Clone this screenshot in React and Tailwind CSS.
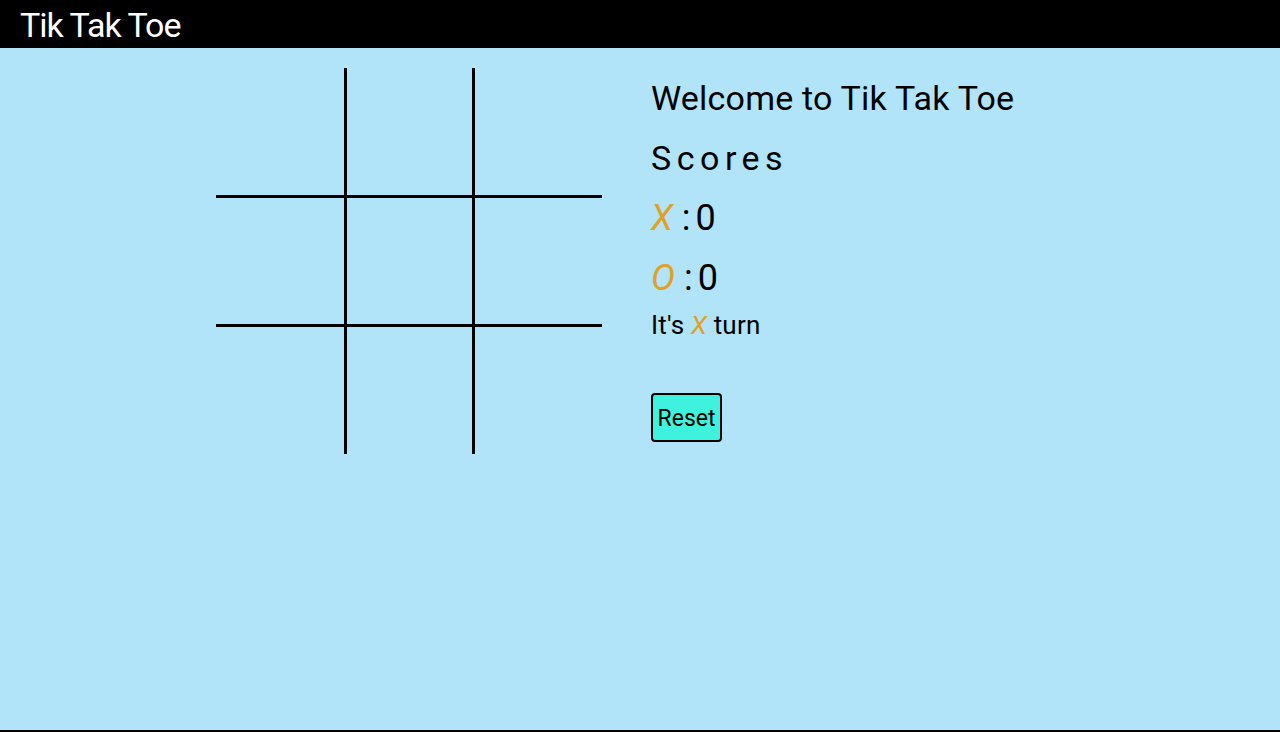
import React, { useState } from 'react';

const font = { fontFamily: 'Roboto, "Noto Sans", sans-serif' };

function Board({ cells, onPlay }) {
    // per-cell border classes so the grid lines only sit between the squares
    const cls = [
        'w-[131px] h-[130px] border-r-[3px] border-b-[3px]',
        'w-[128px] h-[130px] border-r-[3px] border-b-[3px]',
        'w-[127px] h-[130px] border-b-[3px]',
        'w-[131px] h-[129px] border-r-[3px] border-b-[3px]',
        'w-[128px] h-[129px] border-r-[3px] border-b-[3px]',
        'w-[127px] h-[129px] border-b-[3px]',
        'w-[131px] h-[127px] border-r-[3px]',
        'w-[128px] h-[127px] border-r-[3px]',
        'w-[127px] h-[127px]',
    ];
    return (
        <div className="grid grid-cols-[131px_128px_127px] w-[386px] shrink-0">
            {cells.map((c, i) => (
                <button
                    key={i}
                    onClick={() => onPlay(i)}
                    className={`${cls[i]} border-black flex items-center justify-center text-6xl text-[#e0a126] italic`}
                >
                    {c}
                </button>
            ))}
        </div>
    );
}

export default function App() {
    const [cells, setCells] = useState(Array(9).fill(''));
    const [turn, setTurn] = useState('X');
    const [scores] = useState({ X: 0, O: 0 });

    const play = (i) => {
        if (cells[i]) return;
        const next = [...cells];
        next[i] = turn;
        setCells(next);
        setTurn(turn === 'X' ? 'O' : 'X');
    };

    const reset = () => {
        setCells(Array(9).fill(''));
        setTurn('X');
    };

    return (
        <div className="min-h-[732px] bg-[#b1e4f8] flex flex-col border-b-2 border-black" style={font}>
            <header className="h-[48px] bg-black flex items-center pl-[20px]">
                <h1 className="text-white text-[34px] leading-[48px] tracking-[-1px] pt-[2px]">Tik Tak Toe</h1>
            </header>

            <main className="flex pl-[216px] pt-[20px] gap-[49px]">
                <Board cells={cells} onPlay={play} />

                <div className="flex flex-col text-black">
                    <h2 className="text-[34px] leading-[60px] tracking-[0.2px]">Welcome to Tik Tak Toe</h2>
                    <h3 className="text-[34px] leading-[60px] tracking-[5.5px]">Scores</h3>
                    <p className="text-[36px] leading-[60px]">
                        <span className="italic text-[#e0a126]">X</span> <span className="tracking-[5px]">:</span>{scores.X}
                    </p>
                    <p className="text-[36px] leading-[60px]">
                        <span className="italic text-[#e0a126]">O</span> <span className="tracking-[5px]">:</span>{scores.O}
                    </p>
                    <p className="text-[26px] leading-[34px] tracking-[0.2px]">
                        It's <span className="italic text-[#e0a126]">{turn}</span> turn
                    </p>
                    <div className="mt-[51px]">
                        <button
                            onClick={reset}
                            className="h-[49px] w-[71px] pt-[3px] bg-[#3ef2de] border-2 border-black rounded-[4px] text-[23px]"
                        >
                            Reset
                        </button>
                    </div>
                </div>
            </main>
        </div>
    );
}
